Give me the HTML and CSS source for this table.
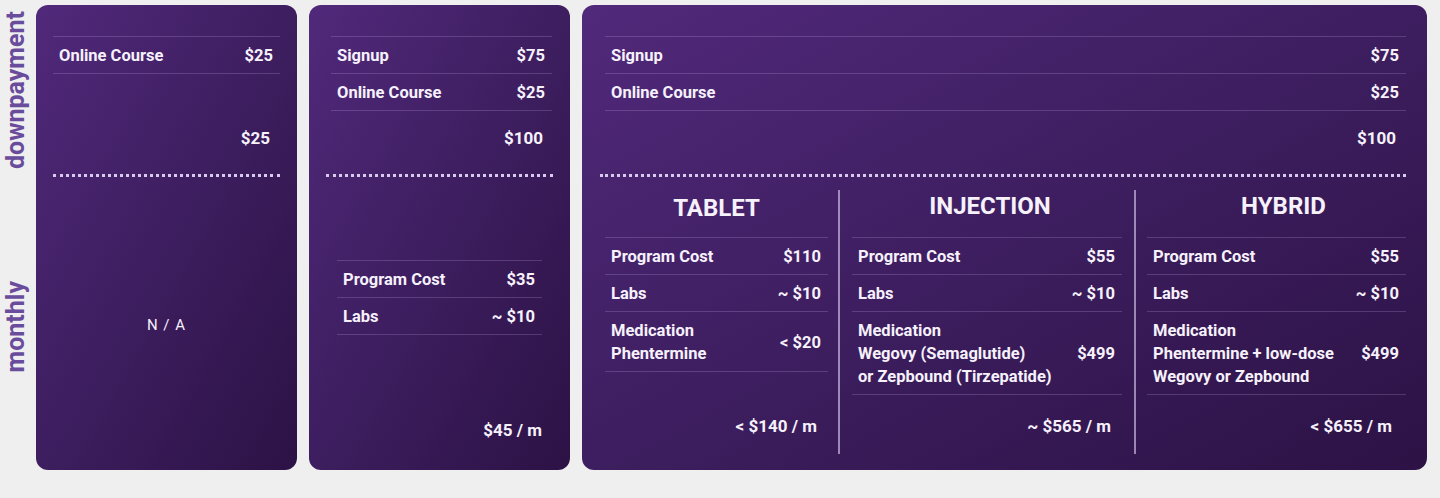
FILE: index.html
```html
<!DOCTYPE html>
<html lang="en">
<head>
<meta charset="utf-8">
<title>Pricing</title>
<link rel="stylesheet" href="styles.css">
</head>
<body>
<div class="page">
  <div class="labels">
    <div class="label label-down"><span>downpayment</span></div>
    <div class="label label-month"><span>monthly</span></div>
  </div>

  <section class="card card-a">
    <div class="down">
      <div class="rows">
        <div class="row"><span>Online Course</span><span>$25</span></div>
      </div>
      <div class="total">$25</div>
    </div>
    <div class="dots"></div>
    <div class="month month-na">N / A</div>
  </section>

  <section class="card card-b">
    <div class="down">
      <div class="rows rows-in">
        <div class="row"><span>Signup</span><span>$75</span></div>
        <div class="row"><span>Online Course</span><span>$25</span></div>
      </div>
      <div class="total">$100</div>
    </div>
    <div class="dots"></div>
    <div class="month month-b">
      <div class="rows">
        <div class="row"><span>Program Cost</span><span>$35</span></div>
        <div class="row"><span>Labs</span><span>~ $10</span></div>
      </div>
      <div class="total total-m">$45 / m</div>
    </div>
  </section>

  <section class="card card-c">
    <div class="down">
      <div class="rows rows-in">
        <div class="row"><span>Signup</span><span>$75</span></div>
        <div class="row"><span>Online Course</span><span>$25</span></div>
      </div>
      <div class="total">$100</div>
    </div>
    <div class="dots"></div>
    <div class="month month-c">
      <div class="col col-1">
        <h2 class="col-title">TABLET</h2>
        <div class="rows">
          <div class="row"><span>Program Cost</span><span>$110</span></div>
          <div class="row"><span>Labs</span><span>~ $10</span></div>
          <div class="row"><span>Medication<br>Phentermine</span><span>&lt; $20</span></div>
        </div>
        <div class="total total-col">&lt; $140 / m</div>
      </div>
      <div class="col col-2">
        <h2 class="col-title">INJECTION</h2>
        <div class="rows">
          <div class="row"><span>Program Cost</span><span>$55</span></div>
          <div class="row"><span>Labs</span><span>~ $10</span></div>
          <div class="row"><span>Medication<br>Wegovy (Semaglutide)<br>or Zepbound (Tirzepatide)</span><span>$499</span></div>
        </div>
        <div class="total total-col">~ $565 / m</div>
      </div>
      <div class="col col-3">
        <h2 class="col-title">HYBRID</h2>
        <div class="rows">
          <div class="row"><span>Program Cost</span><span>$55</span></div>
          <div class="row"><span>Labs</span><span>~ $10</span></div>
          <div class="row"><span>Medication<br>Phentermine + low-dose<br>Wegovy or Zepbound</span><span>$499</span></div>
        </div>
        <div class="total total-col">&lt; $655 / m</div>
      </div>
    </div>
  </section>
</div>
</body>
</html>
```

FILE: styles.css
```css
* { box-sizing: border-box; }

html, body {
  margin: 0;
  padding: 0;
  background: #efefef;
  font-family: Roboto, "Liberation Sans", Arial, sans-serif;
}

.page {
  display: flex;
  gap: 12px;
  padding: 5px 13px 0 0;
  height: 498px;
}

.labels {
  flex: 0 0 30px;
  margin-right: -6px;
  display: flex;
  flex-direction: column;
  height: 465px;
}

.label {
  display: flex;
  align-items: center;
  justify-content: center;
}

.label span {
  writing-mode: vertical-rl;
  transform: rotate(180deg);
  font-size: 25px;
  line-height: 25px;
  font-weight: 700;
  color: #6a4c9d;
}

.label-down { height: 170px; }
.label-month { flex: 1; padding-top: 8px; }

.card {
  height: 465px;
  border-radius: 12px;
  background: linear-gradient(to bottom right, #51297b 0%, #3f1f62 45%, #2c1245 100%);
  color: #f6f1fb;
  display: flex;
  flex-direction: column;
  padding: 0 17px;
}

.card-a { flex: 0 0 261px; }
.card-b { flex: 0 0 261px; }
.card-c { flex: 1; padding: 0 21px 0 18px; }

.down {
  height: 169px;
  padding: 31px 0 24px;
  display: flex;
  flex-direction: column;
}

.rows-in { margin-left: 5px; }
.card-b .rows-in { margin-right: 1px; }

.rows {
  border-top: 1px solid rgba(210, 180, 240, 0.22);
}

.row {
  display: flex;
  justify-content: space-between;
  align-items: center;
  padding: 7px 7px 6px 6px;
  border-bottom: 1px solid rgba(210, 180, 240, 0.22);
  font-size: 16.5px;
  line-height: 23px;
  font-weight: 700;
}

.total {
  margin-top: auto;
  text-align: right;
  font-size: 17px;
  line-height: 23px;
  font-weight: 700;
  padding-right: 10px;
}

.dots {
  height: 0;
  border-top: 3px dotted #d9c9ef;
}

.month {
  flex: 1;
  padding: 13px 0 16px;
  display: flex;
  flex-direction: column;
}

.month-na {
  align-items: center;
  justify-content: center;
  padding-top: 19px;
  font-size: 15px;
  letter-spacing: 1px;
  font-weight: 400;
}

.month-b {
  padding: 83px 11px 28px;
}

.month-b .total-m { padding-right: 0; }

.month-c {
  display: grid;
  grid-template-columns: 238px 296px 1fr;
}

.col {
  display: flex;
  flex-direction: column;
  padding-bottom: 16px;
}

.col-1 { padding-left: 5px; padding-right: 10px; }
.col-2 { border-left: 2px solid rgba(225, 210, 245, 0.6); padding-left: 12px; padding-right: 12px; }
.col-3 { border-left: 2px solid rgba(225, 210, 245, 0.6); padding-left: 11px; padding-right: 0; }

.col-title {
  margin: 0;
  text-align: center;
  font-size: 24px;
  line-height: 32px;
  font-weight: 700;
  padding-bottom: 15px;
}

.col-1 .col-title { padding-top: 2px; padding-bottom: 13px; }
.col-2 .col-title { padding-left: 6px; }
.col-3 .col-title { padding-left: 14px; }

.total-col { padding-right: 11px; }
.col-3 .total-col { padding-right: 14px; }
```
